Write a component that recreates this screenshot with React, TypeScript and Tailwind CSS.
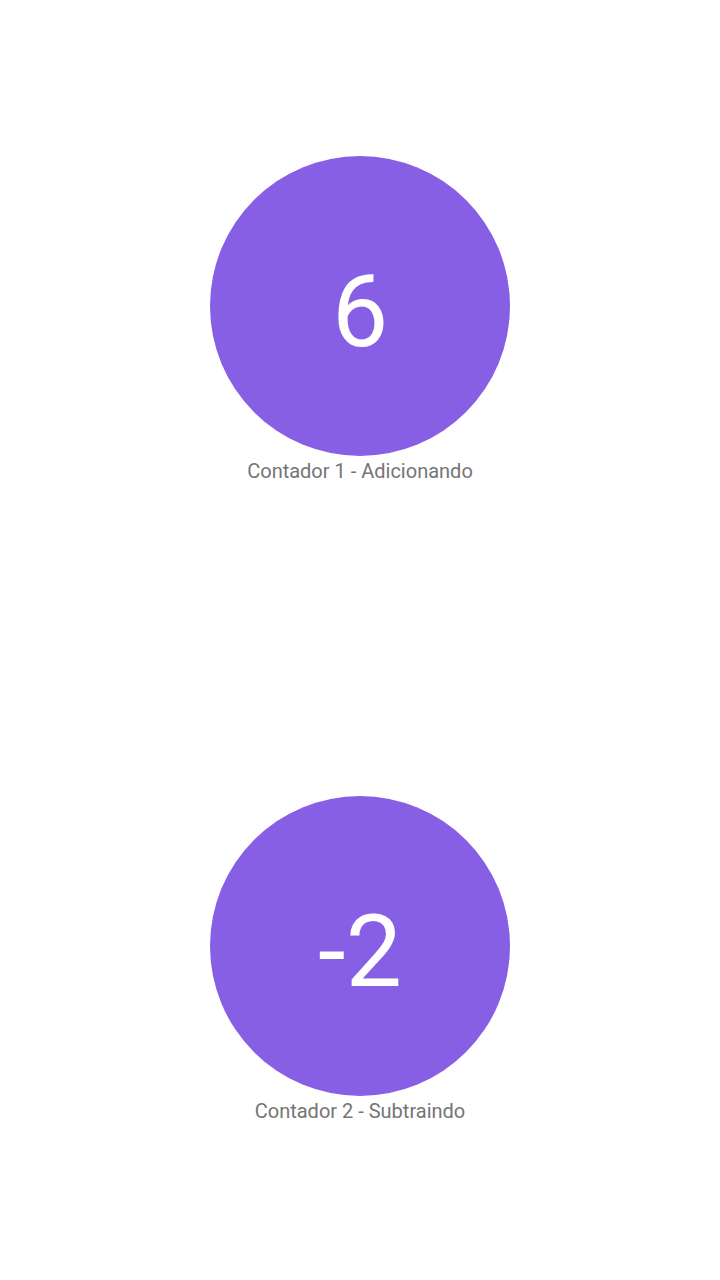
export default function App() {
  const items = [
    { value: "6", label: "Contador 1 - Adicionando" },
    { value: "-2", label: "Contador 2 - Subtraindo" },
  ];
  return (
    <div className="flex flex-col w-[720px] h-[1280px] bg-white" style={{ fontFamily: "Roboto, sans-serif" }}>
      {items.map((it) => (
        <div key={it.label} className="flex-1 flex flex-col items-center justify-center">
          <div className="w-[300px] h-[300px] rounded-full bg-[#875fe5] flex items-center justify-center">
            <span className="text-white text-[100px] leading-none mt-[11px]">{it.value}</span>
          </div>
          <div className="mt-[2px] text-[20px] leading-[26px] text-[#757575]">{it.label}</div>
        </div>
      ))}
    </div>
  );
}
